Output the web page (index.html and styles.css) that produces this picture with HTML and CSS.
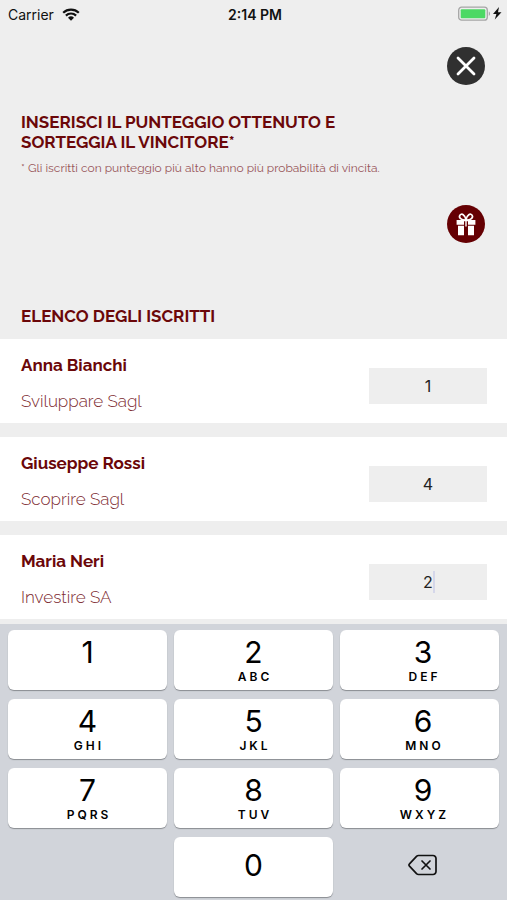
FILE: index.html
```html
<!DOCTYPE html>
<html lang="it">

<head>
    <meta charset="UTF-8">
    <meta name="viewport" content="width=device-width, initial-scale=1.0">
    <title>Sorteggio</title>
    <link rel="stylesheet" href="styles.css">
</head>

<body>

    <div class="status-bar">
        <div class="carrier">
            <span>Carrier</span>
            <svg class="wifi" viewBox="0 0 18 13" width="18" height="13">
                <path d="M1.2 4.8a11.2 11.2 0 0 1 15.6 0M3.9 7.6a7.3 7.3 0 0 1 10.2 0" fill="none" stroke="#111" stroke-width="2.2"/>
                <path d="M6 9.7a4.3 4.3 0 0 1 6 0L9 12.8z" fill="#111"/>
            </svg>
        </div>
        <div class="time">2:14 PM</div>
        <div class="battery">
            <svg viewBox="0 0 44 16" width="44" height="16">
                <rect x="0.7" y="1.2" width="28.6" height="13" rx="3" fill="none" stroke="#a5a5a5" stroke-width="1.3"/>
                <rect x="2.7" y="3.2" width="24.6" height="9" rx="1" fill="#4cd964"/>
                <path d="M30.8 5.500v4.400c1.600-.6 1.600-3.800 0-4.400z" fill="#a5a5a5"/>
                <path d="M41 1L35 8h3.400l-1.600 5.500L43.500 6.300H40z" fill="#111"/>
            </svg>
        </div>
    </div>

    <main>
        <div class="actions">
            <button type="button" class="round-btn close-btn" aria-label="Chiudi">
                <svg viewBox="0 0 38 38" width="38" height="38">
                    <path d="M11 11l16 16M27 11L11 27" fill="none" stroke="#fff" stroke-width="2.8" stroke-linecap="round"/>
                </svg>
            </button>
        </div>

        <div class="intro">
            <h1>INSERISCI IL PUNTEGGIO OTTENUTO E<br>SORTEGGIA IL VINCITORE*</h1>
            <p class="note">* Gli iscritti con punteggio più alto hanno più probabilità di vincita.</p>
        </div>

        <div class="actions">
            <button type="button" class="round-btn gift-btn" aria-label="Sorteggia">
                <svg viewBox="0 0 38 38" width="38" height="38">
                    <path d="M19 15c-5 .2-7.4-2.4-6.2-4.6 1.6-2.6 5.4-.8 6.2 4.600zM19 15c5 .2 7.4-2.4 6.2-4.6-1.6-2.6-5.4-.8-6.2 4.600z" fill="none" stroke="#fff" stroke-width="1.7"/>
                    <path d="M9.600 15H17v4.800H9.600zM21 15h7.400v4.800H21zM11 20.800h6V30.200h-6zM21 20.800h6V30.200h-6z" fill="#fff"/>
                    <path d="M16.800 15h4.400v1.200h-1.500v5.200h-1.400v-5.200h-1.500z" fill="#fff"/>
                </svg>
            </button>
        </div>

        <h2>ELENCO DEGLI ISCRITTI</h2>

        <ul class="list">
            <li class="row">
                <label for="score1">
                    <span class="name">Anna Bianchi</span>
                    <span class="company">Sviluppare Sagl</span>
                </label>
                <div class="score">
                    <input type="text" id="score1" inputmode="numeric" value="1">
                </div>
            </li>
            <li class="row">
                <label for="score2">
                    <span class="name">Giuseppe Rossi</span>
                    <span class="company">Scoprire Sagl</span>
                </label>
                <div class="score">
                    <input type="text" id="score2" inputmode="numeric" value="4">
                </div>
            </li>
            <li class="row">
                <label for="score3">
                    <span class="name">Maria Neri</span>
                    <span class="company">Investire SA</span>
                </label>
                <div class="score active">
                    <input type="text" id="score3" inputmode="numeric" value="2">
                </div>
            </li>
        </ul>
    </main>

    <div class="keyboard">
        <button type="button" class="key">1<small></small></button>
        <button type="button" class="key">2<small>ABC</small></button>
        <button type="button" class="key">3<small>DEF</small></button>
        <button type="button" class="key">4<small>GHI</small></button>
        <button type="button" class="key">5<small>JKL</small></button>
        <button type="button" class="key">6<small>MNO</small></button>
        <button type="button" class="key">7<small>PQRS</small></button>
        <button type="button" class="key">8<small>TUV</small></button>
        <button type="button" class="key">9<small>WXYZ</small></button>
        <button type="button" class="key zero">0</button>
        <button type="button" class="key delete" aria-label="Cancella">
            <svg viewBox="0 0 30 22" width="30" height="22">
                <path d="M10.5 1.5H25a3 3 0 0 1 3 3v13a3 3 0 0 1-3 3H10.5a3 3 0 0 1-2-.8L1.500 12.200a1.600 1.600 0 0 1 0-2.400L8.500 2.300a3 3 0 0 1 2-.8z" fill="none" stroke="#111" stroke-width="1.7"/>
                <path d="M14 7l8 8M22 7l-8 8" fill="none" stroke="#111" stroke-width="1.7" stroke-linecap="round"/>
            </svg>
        </button>
    </div>

</body>

</html>
```
FILE: styles.css
```css
* {
    margin: 0;
    padding: 0;
    box-sizing: border-box;
}

body {
    height: 100vh;
    display: flex;
    flex-direction: column;
    background-color: #eeeeee;
    color: #6b0709;
    font-family: Raleway, Lato, sans-serif;
}

button,
input {
    border: none;
    font-family: Inter, sans-serif;
}

.status-bar {
    display: grid;
    grid-template-columns: 1fr auto 1fr;
    align-items: center;
    height: 28px;
    padding: 0 5px 0 8px;
    color: #111;
    font-family: Inter, sans-serif;
    font-size: 14px;
}

.carrier {
    display: flex;
    align-items: center;
    gap: 8px;
}

.time {
    font-weight: 600;
}

.battery {
    display: flex;
    justify-content: flex-end;
}

main {
    flex: 1;
    min-height: 0;
    overflow: hidden;
    padding-top: 19px;
}

.actions {
    display: flex;
    justify-content: flex-end;
    padding: 0 22px;
}

.round-btn {
    width: 38px;
    height: 38px;
    border-radius: 50%;
    cursor: pointer;
}

.close-btn {
    background-color: #303030;
}

.gift-btn {
    background-color: #650003;
}

.round-btn svg {
    display: block;
}

.intro {
    padding: 27px 21px;
}

h1,
h2 {
    font-size: 17px;
    line-height: 20px;
    font-weight: bold;
}

.note {
    margin-top: 6px;
    font-size: 12px;
    line-height: 20px;
    color: #985559;
}

h2 {
    padding: 63px 21px 13px;
}

.list {
    list-style: none;
    display: flex;
    flex-direction: column;
    gap: 14px;
}

.row {
    display: flex;
    justify-content: space-between;
    align-items: flex-start;
    padding: 15px 20px 11px 21px;
    background-color: #fff;
}

.name,
.company {
    display: block;
    font-size: 17px;
    line-height: 22px;
}

.name {
    font-weight: bold;
}

.company {
    margin-top: 14px;
    color: #7d2a30;
    font-weight: 300;
}

.score {
    position: relative;
    margin-top: 14px;
}

.score input {
    display: block;
    width: 118px;
    height: 36px;
    background-color: #eeeeee;
    color: #222;
    font-size: 16px;
    text-align: center;
}

/* text cursor */
.active::after {
    content: "";
    position: absolute;
    top: 7px;
    left: 64px;
    width: 2px;
    height: 22px;
    background-color: #d5d7ea;
}

.keyboard {
    display: grid;
    grid-template-columns: repeat(3, 1fr);
    gap: 9px 7px;
    padding: 6px 8px 3px;
    background-color: #d1d4da;
}

.key {
    height: 60px;
    display: flex;
    flex-direction: column;
    align-items: center;
    justify-content: center;
    border-radius: 6px;
    background-color: #fff;
    box-shadow: 0 1px 1px #898c91;
    color: #000;
    font-size: 30px;
    line-height: 34px;
}

.key:nth-child(3n),
.delete {
    padding-left: 7px;
}

.key small {
    height: 16px;
    padding-left: 3px;
    font-size: 12px;
    line-height: 16px;
    font-weight: 600;
    letter-spacing: 3px;
}

.zero {
    grid-column: 2;
}

.zero,
.delete {
    padding-bottom: 4px;
}

.delete {
    background: none;
    box-shadow: none;
}
```
